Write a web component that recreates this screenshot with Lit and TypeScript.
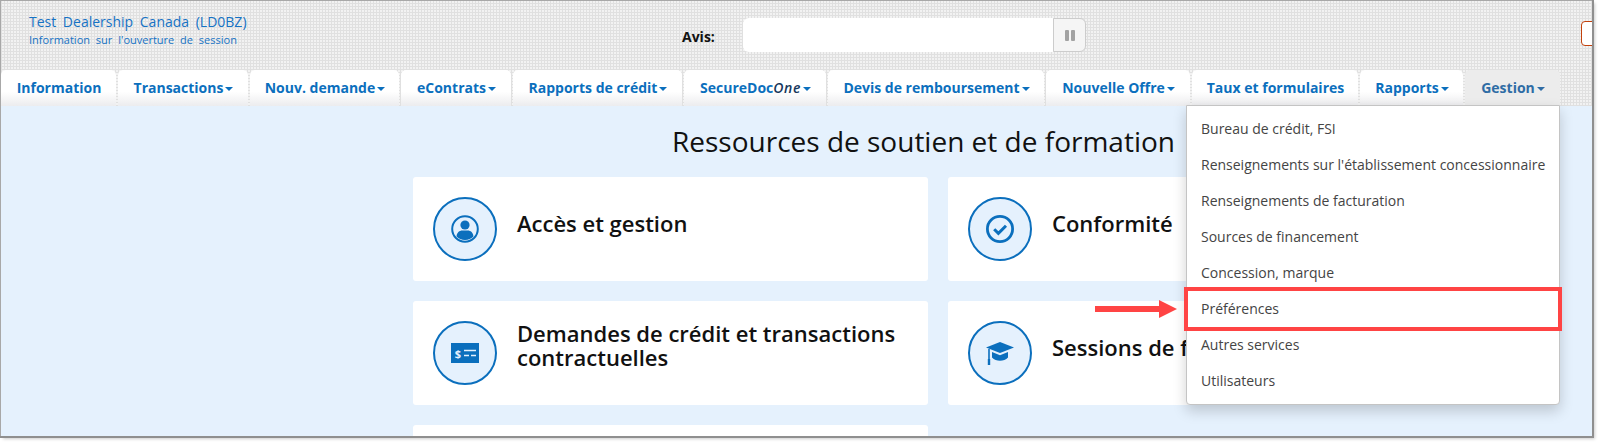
import { LitElement, html, css, svg } from "lit";
import { customElement } from "lit/decorators.js";

const ICONS = {
  user: svg`<circle cx="14" cy="14" r="12.8" fill="none" stroke="#0b6fbd" stroke-width="2"/><circle cx="14" cy="10" r="4.6" fill="#0b6fbd"/><path d="M5.6 21.5c0-3.900 3-6 5.600-6h5.600c2.600 0 5.600 2.100 5.600 6-2 2.200-5 3.500-8.400 3.500s-6.400-1.300-8.400-3.500z" fill="#0b6fbd"/>`,
  check: svg`<circle cx="14" cy="14" r="12.600" fill="none" stroke="#0b6fbd" stroke-width="2.800"/><path d="M8.200 14.200l4.200 4.200 7.600-7.600" fill="none" stroke="#0b6fbd" stroke-width="3"/>`,
  money: svg`<rect x="0" y="4" width="28" height="20" fill="#0b6fbd"/><text x="7" y="18.500" font-size="11" font-weight="700" text-anchor="middle" fill="#e5f1fd" font-family="Open Sans">$</text><path d="M13 11.500h12M13 16.500h5M20 16.500h5" stroke="#e5f1fd" stroke-width="1.300"/>`,
  cap: svg`<path d="M14 3L28 8.500 14 14 0 8.500z" fill="#0b6fbd"/><path d="M6 13l8 3.200L22 13v5.500c-2 2.300-5 3.200-8 3.200s-6-.9-8-3.200z" fill="#0b6fbd"/><path d="M3 10v13" stroke="#0b6fbd" stroke-width="1.600"/><rect x="1.800" y="20" width="2.400" height="6" fill="#0b6fbd"/>`,
};

@customElement("app-root")
export class AppRoot extends LitElement {
  static styles = css`
    :host { display: block; width: 1600px; height: 444px; background: #fff; position: relative; overflow: hidden; font-family: "Open Sans", "Liberation Sans", sans-serif; }
    .frame { width: 1592px; height: 436px; box-sizing: border-box; border: 1px solid #a8a8a8; border-width: 1px 0 0 1px; box-shadow: 1px 1px 0 1px #8f8f8f, 3px 3px 3px #ccc; display: flex; flex-direction: column; overflow: hidden; position: relative; background: #e5f1fd; }
    .head { height: 69px; flex: none; display: flex; position: relative; background-color: #f2f2f2;
      background-image: repeating-linear-gradient(0deg, #e0e0e0 0 1px, transparent 1px 3px), repeating-linear-gradient(90deg, #e0e0e0 0 1px, transparent 1px 3px); }
    .brand { width: 681px; padding: 11px 0 0 28px; box-sizing: border-box; color: #1672c4; flex: none; }
    .brand .t { font-size: 14px; line-height: 19px; word-spacing: 3px; }
    .brand .s { font-size: 11px; line-height: 16px; word-spacing: 3px; margin-top: 1px; }
    .avis { font-weight: 700; font-size: 14px; color: #111; width: 61px; padding-top: 27px; line-height: 18px; flex: none; box-sizing: border-box; }
    .input { width: 310px; height: 34px; margin-top: 17px; background: #fff; border-radius: 6px 0 0 6px; flex: none; }
    .pause { width: 33px; height: 34px; margin-top: 17px; box-sizing: border-box; border: 1px solid #ccc; border-radius: 0 6px 6px 0; background: #f5f5f5; display: flex; align-items: center; justify-content: center; gap: 2px; flex: none; }
    .pause i { width: 4px; height: 11px; background: #a2a2a2; border-radius: 1px; }
    .red { position: absolute; left: 1580px; top: 20px; width: 30px; height: 25px; box-sizing: border-box; border: 1px solid #c2410c; border-radius: 4px; background: #fff; }
    .tabs { height: 36px; flex: none; display: flex; gap: 2px; background-color: #f2f2f2; padding-right: 32px;
      background-image: repeating-linear-gradient(0deg, #e0e0e0 0 1px, transparent 1px 3px), repeating-linear-gradient(90deg, #e0e0e0 0 1px, transparent 1px 3px); }
    .tab { box-sizing: border-box; display: flex; align-items: center; justify-content: center; padding-left: 1px; border-radius: 5px 5px 0 0; background: linear-gradient(#fff 0 60%, #ececee 100%); color: #0b6fbd; font-size: 14px; font-weight: 700; line-height: 20px; white-space: nowrap; flex: none; }
    .tab em { font-weight: 600; font-style: italic; letter-spacing: .6px; color: #16375c; }
    .tab.active { background: #ececec; color: #2f6ca5; }
    .caret { display: inline-block; width: 0; height: 0; margin-left: 2px; margin-top: 2px; border-top: 4px solid currentColor; border-left: 4px solid transparent; border-right: 4px solid transparent; }
    main { flex: 1; position: relative; padding-left: 412px; }
    h1 { margin: 17px 0 0 259px; font-size: 28px; font-weight: 400; line-height: 36px; color: #111; white-space: nowrap; }
    .grid { display: grid; grid-template-columns: 515px 515px; column-gap: 20px; row-gap: 20px; margin-top: 18px; }
    .card { height: 104px; background: #fff; border-radius: 3px; box-sizing: border-box; padding: 20px; display: flex; gap: 20px; }
    .circle { width: 64px; height: 64px; box-sizing: border-box; flex: none; border: 2px solid #0b6fbd; border-radius: 50%; background: #e5f1fd; display: flex; align-items: center; justify-content: center; }
    .title { font-size: 22px; line-height: 24px; font-weight: 600; color: #111; align-self: center; margin-top: -12px; }
    .title.two { margin-top: -16px; }
    .menu { position: absolute; left: 1185px; top: -1px; width: 374px; height: 300px; box-sizing: border-box; background: #fff; border: 1px solid #c4c4c4; border-radius: 0 0 4px 4px; box-shadow: 0 6px 14px rgba(0,0,0,.18); padding: 5px 0; }
    .menu div { height: 36px; line-height: 36px; padding-left: 14px; font-size: 14px; color: #444; white-space: nowrap; }
    .box { position: absolute; left: 1184px; top: 287px; width: 378px; height: 44px; box-sizing: border-box; border: 4px solid #ff4444; }
    .arrow { position: absolute; left: 1095px; top: 300px; }
  `;

  render() {
    const tabs: [any, number, boolean, boolean?][] = [
      ["Information", 115, false],
      ["Transactions", 130, true],
      ["Nouv. demande", 149, true],
      ["eContrats", 110, true],
      ["Rapports de crédit", 169, true],
      [html`SecureDoc<em>One</em>`, 142, true],
      ["Devis de remboursement", 216, true],
      ["Nouvelle Offre", 144, true],
      ["Taux et formulaires", 166, false],
      ["Rapports", 103, true],
      ["Gestion", 95, true, true],
    ];
    const cards: [string, any, boolean?][] = [
      ["Accès et gestion", ICONS.user],
      ["Conformité", ICONS.check],
      ["Demandes de crédit et transactions contractuelles", ICONS.money, true],
      ["Sessions de formation", ICONS.cap],
      ["", null],
    ];
    const items = ["Bureau de crédit, FSI", "Renseignements sur l'établissement concessionnaire", "Renseignements de facturation", "Sources de financement", "Concession, marque", "Préférences", "Autres services", "Utilisateurs"];
    return html`
      <div class="frame">
        <div class="head">
          <div class="brand">
            <div class="t">Test Dealership Canada (LD0BZ)</div>
            <div class="s">Information sur l'ouverture de session</div>
          </div>
          <div class="avis">Avis:</div>
          <div class="input"></div>
          <div class="pause"><i></i><i></i></div>
          <div class="red"></div>
        </div>
        <div class="tabs">
          ${tabs.map(([label, w, caret, active]) => html`
            <div class="tab ${active ? "active" : ""}" style="width:${w}px">${label}${caret ? html`<span class="caret"></span>` : ""}</div>`)}
        </div>
        <main>
          <h1>Ressources de soutien et de formation</h1>
          <div class="grid">
            ${cards.map(([t, icon, two]) => html`
              <div class="card">
                ${icon ? html`<div class="circle"><svg width="28" height="28" viewBox="0 0 28 28">${icon}</svg></div><div class="title ${two ? "two" : ""}">${t}</div>` : ""}
              </div>`)}
          </div>
          <div class="menu">${items.map((i) => html`<div>${i}</div>`)}</div>
        </main>
      </div>
      <div class="box"></div>
      <svg class="arrow" width="82" height="18" viewBox="0 0 82 18"><path d="M0 6h64V0l18 9-18 9v-6H0z" fill="#ff4444"/></svg>
    `;
  }
}
